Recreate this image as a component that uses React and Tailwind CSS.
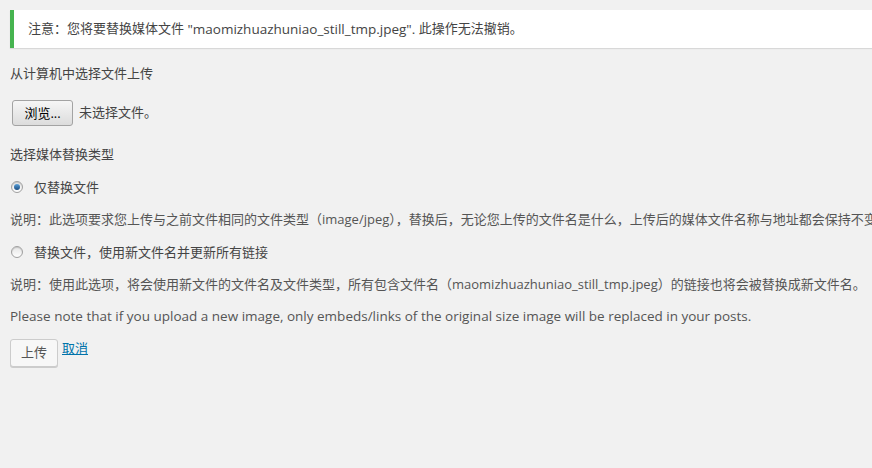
import React from 'react';

const font = { fontFamily: '"Open Sans", "Noto Sans CJK SC", sans-serif' };

function Radio({ checked }) {
  return (
    <span className="relative inline-flex w-[12px] h-[12px] rounded-full border border-[#a0a0a0] bg-gradient-to-b from-[#e6e6e6] to-[#fdfdfd] items-center justify-center shadow-[inset_0_1px_1px_rgba(0,0,0,0.15)]">
      {checked && (
        <span className="w-[6px] h-[6px] rounded-full bg-gradient-to-b from-[#5aa0d8] to-[#1b4e82]" />
      )}
    </span>
  );
}

export default function App() {
  return (
    <div
      className="min-h-[468px] w-[872px] overflow-hidden bg-[#f1f1f1] text-[13px] text-[#444] pb-[100px]"
      style={font}
    >
      <div className="mt-[10px] ml-[10px] h-[38px] flex items-center bg-white border-l-4 border-[#46b450] pl-[14px] shadow-[0_1px_1px_rgba(0,0,0,0.1)] whitespace-nowrap">
        注意：您将要替换媒体文件&nbsp;
        <span className="text-[13.5px]">"maomizhuazhuniao_still_tmp.jpeg".</span>
        &nbsp;此操作无法撤销。
      </div>

      <div className="ml-[10px] mt-[15px] leading-[20px]">从计算机中选择文件上传</div>

      <div className="ml-[12px] mt-[17px] flex items-center gap-[6px]">
        <button className="w-[61px] h-[26px] rounded-[3px] border border-[#a3a3a3] bg-gradient-to-b from-[#f6f6f6] to-[#dcdcdc] text-black text-[13px] leading-none">
          浏览...
        </button>
        <span>未选择文件。</span>
      </div>

      <div className="ml-[10px] mt-[18px] leading-[20px]">选择媒体替换类型</div>

      <label className="ml-[11px] mt-[13px] flex items-center gap-[11px] leading-[20px]">
        <Radio checked />
        <span>仅替换文件</span>
      </label>

      <div className="ml-[10px] mt-[12px] w-[862px] overflow-hidden">
        <p className="leading-[20px] whitespace-nowrap text-[#555]">
          说明：此选项要求您上传与之前文件相同的文件类型（image/jpeg），替换后，无论您上传的文件名是什么，上传后的媒体文件名称与地址都会保持不变。
        </p>
      </div>

      <label className="ml-[11px] mt-[13px] flex items-center gap-[11px] leading-[20px]">
        <Radio />
        <span>替换文件，使用新文件名并更新所有链接</span>
      </label>

      <p className="ml-[10px] mt-[12px] leading-[20px] whitespace-nowrap text-[#555]">
        说明：使用此选项，将会使用新文件的文件名及文件类型，所有包含文件名（maomizhuazhuniao_still_tmp.jpeg）的链接也将会被替换成新文件名。
      </p>

      <p className="ml-[10px] mt-[12px] leading-[20px] whitespace-nowrap text-[#555] text-[13.5px]">
        Please note that if you upload a new image, only embeds/links of the original size image will be replaced in your posts.
      </p>

      <div className="ml-[10px] mt-[13px] flex items-start gap-[4px]">
        <button className="w-[48px] h-[28px] rounded-[3px] border border-[#cccccc] bg-[#f7f7f7] shadow-[0_1px_0_#cccccc] text-[13px] text-[#555]">
          上传
        </button>
        <a href="#" className="text-[#0073aa] underline leading-[20px] mt-[-1px]">
          取消
        </a>
      </div>
    </div>
  );
}
